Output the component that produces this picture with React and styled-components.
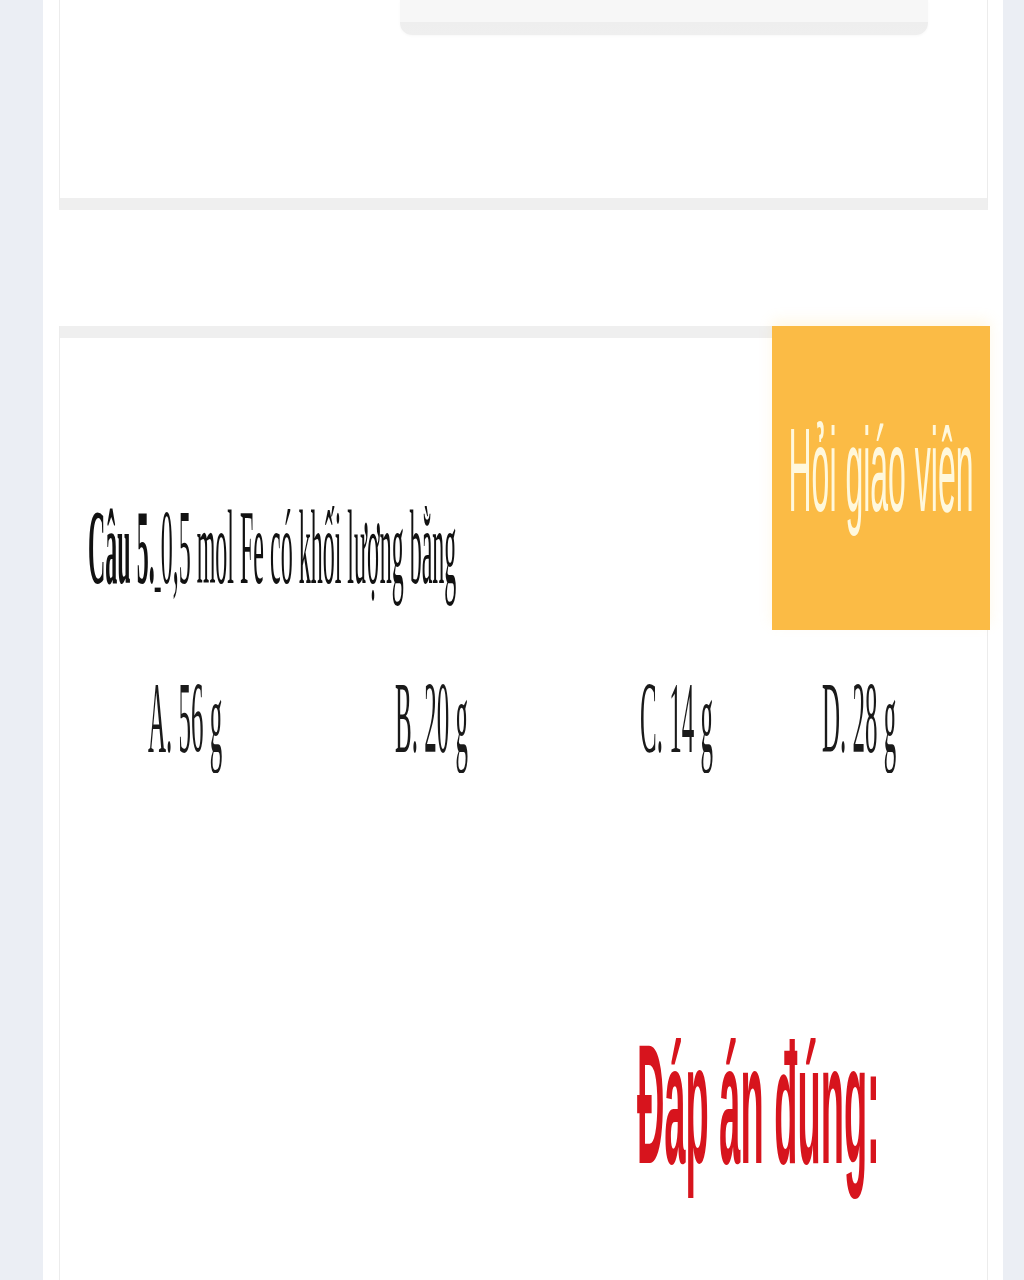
import React from "react";
import styled, { createGlobalStyle } from "styled-components";

const GlobalStyle = createGlobalStyle`
  html, body {
    margin: 0;
    padding: 0;
    background: #ebeef4;
    overflow: hidden;
  }
  * {
    box-sizing: border-box;
  }
`;

const Page = styled.div`
  margin-left: 43px;
  width: 960px;
  height: 1280px;
  background: #ffffff;
  padding: 0 15px 0 16px;
`;

const TopCard = styled.div`
  height: 210px;
  border-left: 1px solid #ececec;
  border-right: 1px solid #ececec;
  border-bottom: 12px solid #efefef;
`;

const HintBox = styled.div`
  margin-left: 340px;
  width: 528px;
  height: 35px;
  border-radius: 0 0 12px 12px;
  background: linear-gradient(#f7f7f7 0, #f7f7f7 64%, #eeeeee 64%, #efefef 100%);
  box-shadow: 0 1px 3px rgba(0, 0, 0, 0.03);
`;

const QuestionCard = styled.div`
  margin-top: 116px;
  height: 954px;
  border-left: 1px solid #ececec;
  border-right: 1px solid #ececec;
`;

const Header = styled.div`
  display: grid;
  grid-template-columns: 1fr 215px;
  height: 304px;
`;

const HeaderLeft = styled.div`
  display: flex;
  flex-direction: column;
`;

const TopBand = styled.div`
  height: 12px;
  background: #efefef;
`;

const QuestionLine = styled.div`
  margin-top: 198px;
  padding-left: 28px;
  height: 24px;
`;

const AskButton = styled.div`
  margin-right: -3px;
  display: flex;
  align-items: center;
  justify-content: center;
  padding-bottom: 16px;
  background: #fbbb45;
  box-shadow: 0 -6px 12px rgba(255, 214, 120, 0.18);
`;

const Stretch = styled.span`
  display: inline-block;
  white-space: nowrap;
  line-height: 1;
  transform: scaleY(${(p) => p.$sy});
  transform-origin: 50% 50%;
  font-family: ${(p) => (p.$serif ? '"Liberation Serif", "Times New Roman", serif' : '"Liberation Sans", Arial, sans-serif')};
  font-size: ${(p) => p.$size}px;
  font-weight: ${(p) => (p.$bold ? 700 : 400)};
  color: ${(p) => p.$color || "#111"};
`;

const Blank = styled.u`
  text-decoration-thickness: 1px;
`;

const Options = styled.div`
  margin-top: 75px;
  padding-left: 88px;
  display: grid;
  grid-template-columns: 247px 245px 182px auto;
  height: 25px;
`;

const AnswerLine = styled.div`
  margin-top: 356px;
  padding-left: 577px;
  height: 38px;
`;

const options = ["A. 56 g", "B. 20 g", "C. 14 g", "D. 28 g"];

export default function App() {
  return (
    <>
      <GlobalStyle />
      <Page>
        <TopCard>
          <HintBox />
        </TopCard>
        <QuestionCard>
          <Header>
            <HeaderLeft>
              <TopBand />
              <QuestionLine>
                <Stretch $serif $size={24} $sy={4.4}>
                  <b>Câu 5.</b>
                  <Blank> </Blank>0,5 mol Fe có khối lượng bằng
                </Stretch>
              </QuestionLine>
            </HeaderLeft>
            <AskButton>
              <Stretch $size={32} $sy={3.7} $color="#fff8dc">
                Hỏi giáo viên
              </Stretch>
            </AskButton>
          </Header>
          <Options>
            {options.map((o) => (
              <div key={o}>
                <Stretch $serif $size={25} $sy={4.1} $color="#1a1a1a">
                  {o}
                </Stretch>
              </div>
            ))}
          </Options>
          <AnswerLine>
            <Stretch $bold $size={38} $sy={4.48} $color="#d7141d">
              Đáp án đúng:
            </Stretch>
          </AnswerLine>
        </QuestionCard>
      </Page>
    </>
  );
}
